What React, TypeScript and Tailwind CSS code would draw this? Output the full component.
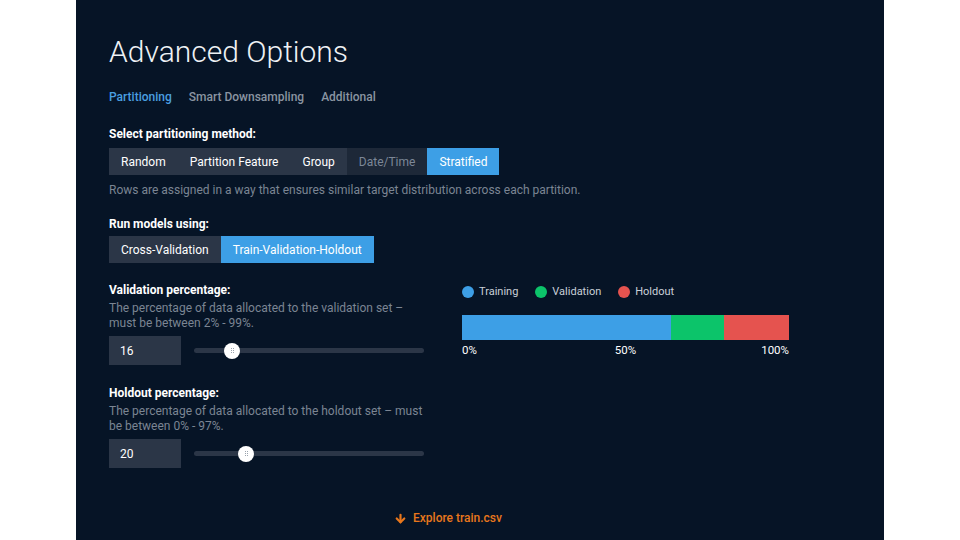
import { ArrowDown } from "lucide-react";

const FONT = { fontFamily: "Roboto, 'Noto Sans', sans-serif" };

function Segmented({
  items,
  active,
  disabled = [],
}: {
  items: string[];
  active: string;
  disabled?: string[];
}) {
  return (
    <div className="flex h-[27px]">
      {items.map((item) => {
        const on = item === active;
        const off = disabled.includes(item);
        return (
          <div
            key={item}
            className={
              "flex items-center px-3 text-[12px] " +
              (on
                ? "bg-[#3d9fe6] text-white"
                : off
                  ? "bg-[#1d2838] text-[#7c8797]"
                  : "bg-[#2b3647] text-white")
            }
          >
            {item}
          </div>
        );
      })}
    </div>
  );
}

function Slider({ value, left }: { value: number; left: number }) {
  return (
    <div className="flex items-center gap-[13px]">
      <div className="flex h-[29px] w-[72px] items-center bg-[#2b3647] pl-[11px] text-[12px] text-white">
        {value}
      </div>
      <div className="relative h-[5px] w-[230px] rounded-full bg-[#2b3647]">
        <div
          className="absolute top-1/2 flex h-[16px] w-[16px] -translate-x-1/2 -translate-y-1/2 items-center justify-center rounded-full bg-white"
          style={{ left }}
        >
          <div className="grid grid-cols-2 gap-[1px]">
            <span className="h-[1px] w-[1px] bg-[#9aa3ad]" />
            <span className="h-[1px] w-[1px] bg-[#9aa3ad]" />
            <span className="h-[1px] w-[1px] bg-[#9aa3ad]" />
            <span className="h-[1px] w-[1px] bg-[#9aa3ad]" />
            <span className="h-[1px] w-[1px] bg-[#9aa3ad]" />
            <span className="h-[1px] w-[1px] bg-[#9aa3ad]" />
          </div>
        </div>
      </div>
    </div>
  );
}

function Legend({ color, label }: { color: string; label: string }) {
  return (
    <div className="flex items-center gap-[5px]">
      <span className="h-[12px] w-[12px] rounded-full" style={{ background: color }} />
      <span className="text-[11px] text-[#c9d0d8]">{label}</span>
    </div>
  );
}

export default function App() {
  return (
    <div className="flex h-[540px] w-[960px] bg-white" style={FONT}>
      <div className="ml-[76px] flex h-full w-[808px] flex-col bg-[#061426] pl-[33px]">
        <h1 className="mt-[33px] text-[30px] font-light leading-[38px] text-[#eef1f4]">
          Advanced Options
        </h1>
        <div className="mt-[17px] flex gap-[17px] text-[12px] font-medium">
          <span className="text-[#4a9fe0]">Partitioning</span>
          <span className="text-[#8a94a1]">Smart Downsampling</span>
          <span className="text-[#8a94a1]">Additional</span>
        </div>

        <div className="mt-[19px] text-[12px] font-bold text-white">
          Select partitioning method:
        </div>
        <div className="mt-[5px]">
          <Segmented
            items={["Random", "Partition Feature", "Group", "Date/Time", "Stratified"]}
            active="Stratified"
            disabled={["Date/Time"]}
          />
        </div>
        <div className="mt-[6px] text-[12px] text-[#7b8593]">
          Rows are assigned in a way that ensures similar target distribution across each partition.
        </div>

        <div className="mt-[16px] text-[12px] font-bold text-white">Run models using:</div>
        <div className="mt-[3px]">
          <Segmented items={["Cross-Validation", "Train-Validation-Holdout"]} active="Train-Validation-Holdout" />
        </div>

        <div className="mt-[18px] flex">
          <div className="flex w-[353px] flex-col">
            <div className="text-[12px] font-bold text-white">Validation percentage:</div>
            <div className="mt-[2px] w-[300px] text-[12px] leading-[15px] text-[#7b8593]">
              The percentage of data allocated to the validation set – must be between 2% - 99%.
            </div>
            <div className="mt-[5px]">
              <Slider value={16} left={38} />
            </div>

            <div className="mt-[19px] text-[12px] font-bold text-white">Holdout percentage:</div>
            <div className="mt-[2px] w-[320px] text-[12px] leading-[15px] text-[#7b8593]">
              The percentage of data allocated to the holdout set – must be between 0% - 97%.
            </div>
            <div className="mt-[5px]">
              <Slider value={20} left={52} />
            </div>
          </div>

          <div className="flex w-[327px] flex-col pt-[3px]">
            <div className="flex gap-[17px]">
              <Legend color="#3d9fe6" label="Training" />
              <Legend color="#0cc46a" label="Validation" />
              <Legend color="#e5534f" label="Holdout" />
            </div>
            <div className="mt-[14px] flex h-[25px]">
              <div className="w-[64%] bg-[#3d9fe6]" />
              <div className="w-[16%] bg-[#0cc46a]" />
              <div className="w-[20%] bg-[#e5534f]" />
            </div>
            <div className="mt-[2px] grid grid-cols-3 text-[11.5px] text-white">
              <span className="text-left">0%</span>
              <span className="text-center">50%</span>
              <span className="text-right">100%</span>
            </div>
          </div>
        </div>

        <div className="mt-auto mb-[13px] flex items-center justify-center gap-[6px] pr-[97px] text-[12px] font-medium text-[#e8771c]">
          <ArrowDown size={13} strokeWidth={4} />
          <span>Explore train.csv</span>
        </div>
      </div>
    </div>
  );
}
